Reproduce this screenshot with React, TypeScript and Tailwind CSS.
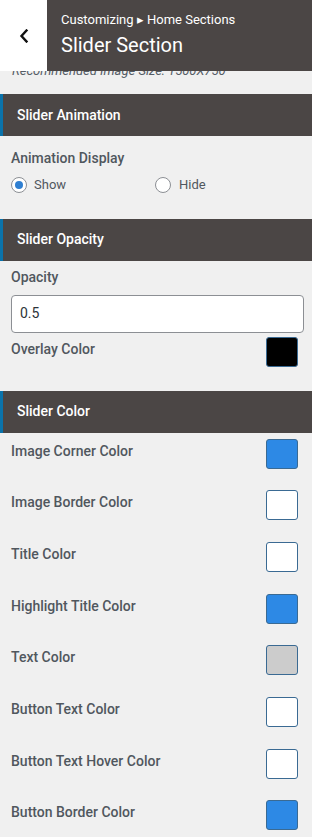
export default function App() {
  const colorRows: { label: string; color: string }[] = [
    { label: "Image Corner Color", color: "bg-[#2d89e5]" },
    { label: "Image Border Color", color: "bg-white" },
    { label: "Title Color", color: "bg-white" },
    { label: "Highlight Title Color", color: "bg-[#2d89e5]" },
    { label: "Text Color", color: "bg-[#cccccc]" },
    { label: "Button Text Color", color: "bg-white" },
    { label: "Button Text Hover Color", color: "bg-white" },
    { label: "Button Border Color", color: "bg-[#2d89e5]" },
  ];

  return (
    <div className="relative w-[312px] h-[837px] overflow-hidden bg-[#f0f0f0] font-['Roboto',sans-serif]">
      {/* Fixed header over the scrolled panel */}
      <header className="absolute top-0 left-0 right-0 z-10 h-[71px] flex">
        <div className="w-[47px] bg-white flex items-center justify-center">
          <svg width="10" height="14" viewBox="0 0 10 14" fill="none">
            <path d="M7.5 1.5L2.5 7l5 5.5" stroke="#111" strokeWidth="2.4" strokeLinecap="square" />
          </svg>
        </div>
        <div className="flex-1 bg-[#4b4645] pl-[14px] pt-[11px] text-white">
          <div className="text-[13px] leading-[17px]">Customizing ▸ Home Sections</div>
          <div className="text-[20px] leading-[28px] mt-[3px]">Slider Section</div>
        </div>
      </header>

      {/* Panel content */}
      <div className="pt-[62px]">
        <p className="px-[12px] text-[13px] leading-[18px] italic text-[#555d66]">
          Recommended Image Size: 1500X750
        </p>

        <SectionHeader title="Slider Animation" className="mt-[14px]" />
        <div className="px-[11px] pt-[12px] pb-[24px]">
          <div className="text-[14px] leading-[20px] font-medium text-[#50575e]">Animation Display</div>
          <div className="flex items-center mt-[7px] text-[13px] text-[#50575e]">
            <label className="flex items-center w-[144px]">
              <span className="w-[16px] h-[16px] rounded-full border border-[#8c8f94] bg-white flex items-center justify-center">
                <span className="w-[8px] h-[8px] rounded-full bg-[#2f7fd1]" />
              </span>
              <span className="ml-[7px]">Show</span>
            </label>
            <label className="flex items-center">
              <span className="w-[16px] h-[16px] rounded-full border border-[#8c8f94] bg-white" />
              <span className="ml-[8px]">Hide</span>
            </label>
          </div>
        </div>

        <SectionHeader title="Slider Opacity" />
        <div className="pl-[11px] pr-[8px] pt-[6px] pb-[24px]">
          <div className="text-[14px] leading-[20px] font-medium text-[#50575e]">Opacity</div>
          <div className="mt-[8px] h-[38px] rounded-[4px] border border-[#8c8f94] bg-white flex items-center px-[8px] text-[14px] text-[#2c3338]">
            0.5
          </div>
          <div className="flex justify-between items-start mt-[4px] pr-[6px]">
            <span className="text-[14px] leading-[20px] font-medium text-[#50575e] mt-[2px]">Overlay Color</span>
            <span className="w-[32px] h-[30px] rounded-[3px] border border-[#3a6a93] bg-black" />
          </div>
        </div>

        <SectionHeader title="Slider Color" />
        <div className="px-[11px] pt-[6px]">
          {colorRows.map((row) => (
            <div key={row.label} className="h-[51.7px] flex justify-between items-start pr-[3px]">
              <span className="text-[14px] leading-[20px] font-medium text-[#50575e] mt-[2px]">{row.label}</span>
              <span className={`w-[32px] h-[30px] rounded-[3px] border border-[#3a6a93] ${row.color}`} />
            </div>
          ))}
        </div>
      </div>
    </div>
  );
}

function SectionHeader({ title, className = "" }: { title: string; className?: string }) {
  return (
    <div className={`h-[42px] flex items-center bg-[#4b4645] border-l-[3px] border-[#0a73ab] pl-[14px] ${className}`}>
      <span className="text-[14px] font-medium text-white">{title}</span>
    </div>
  );
}
